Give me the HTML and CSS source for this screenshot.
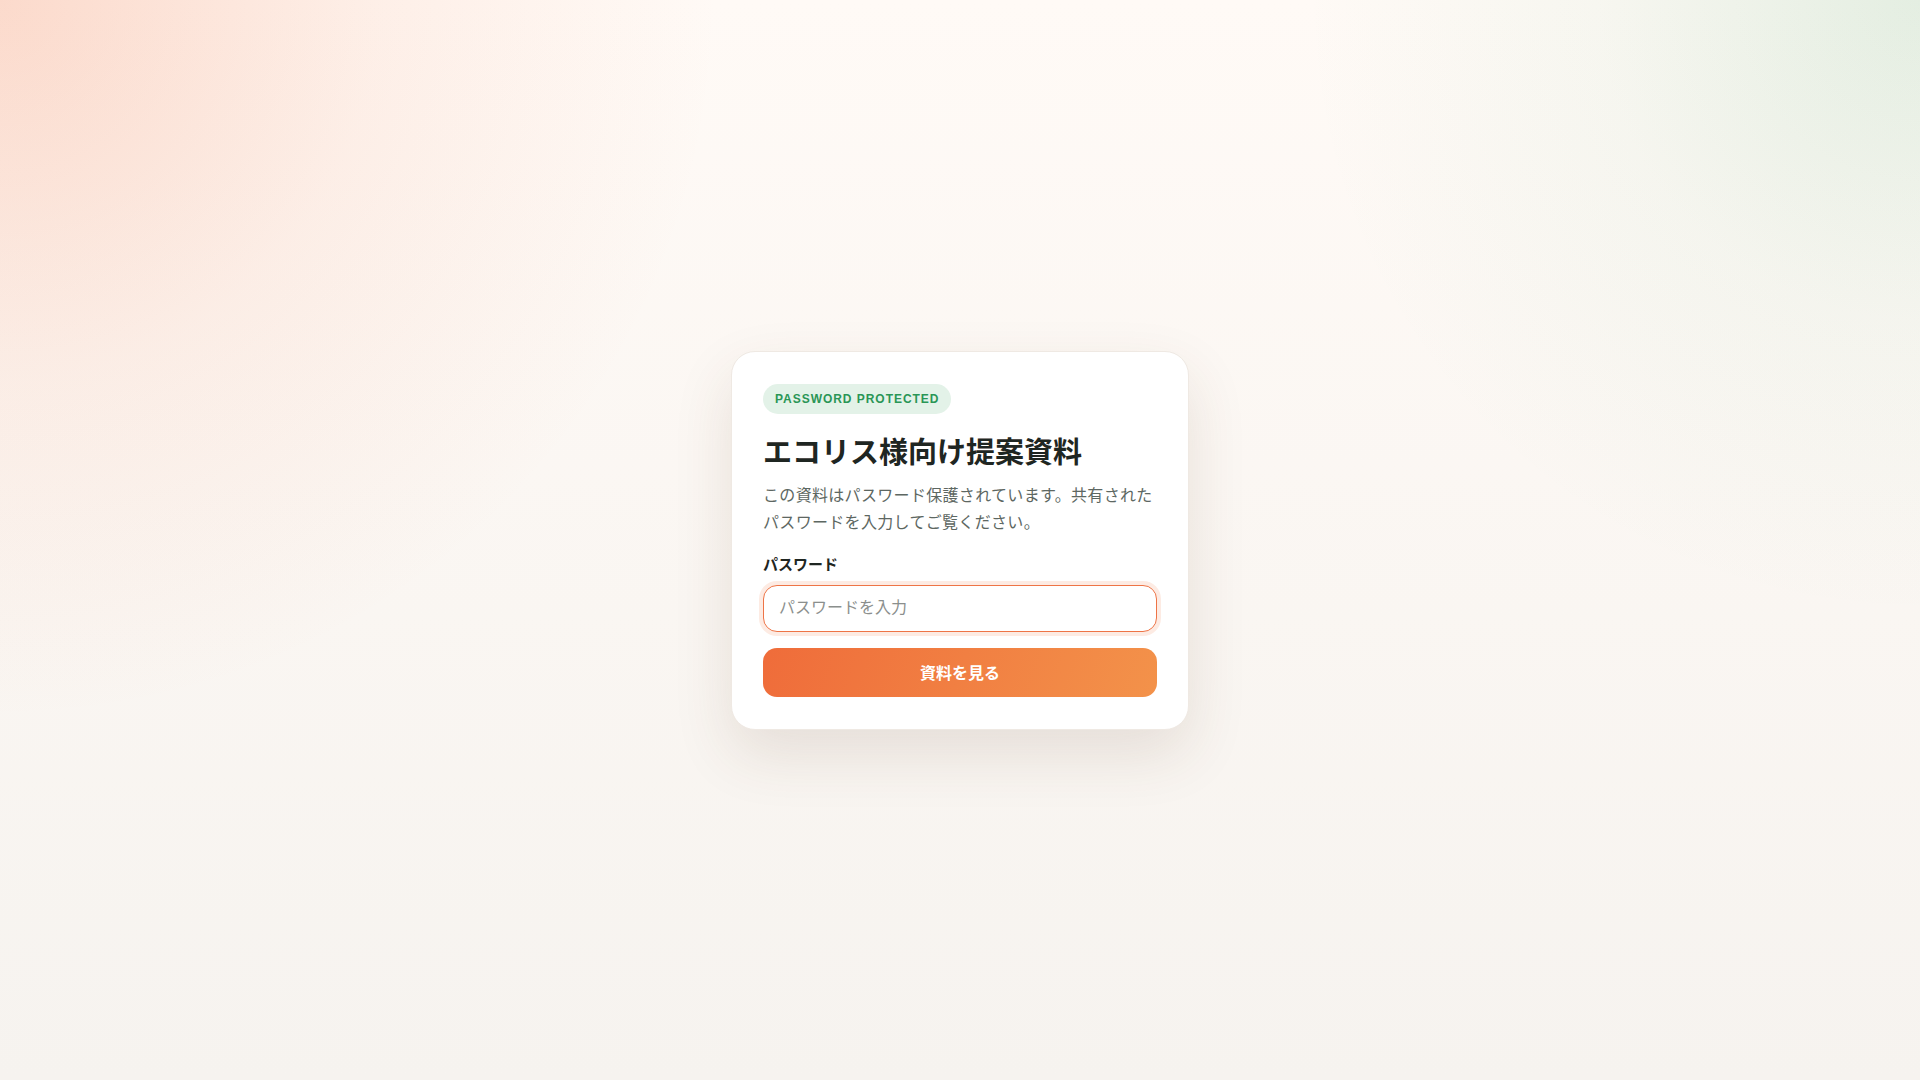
FILE: index.html
```html
<!DOCTYPE html>
<html lang="ja">
<head>
<meta charset="utf-8">
<title>エコリス様向け提案資料</title>
<link rel="stylesheet" href="styles.css">
</head>
<body>
<main class="page">
  <form class="card">
    <span class="badge">PASSWORD PROTECTED</span>
    <h1 class="title">エコリス様向け提案資料</h1>
    <p class="desc">この資料はパスワード保護されています。共有されたパスワードを入力してご覧ください。</p>
    <label class="label" for="pw">パスワード</label>
    <input class="input" id="pw" type="password" placeholder="パスワードを入力">
    <button class="button" type="button">資料を見る</button>
  </form>
</main>
</body>
</html>
```

FILE: styles.css
```css
* { box-sizing: border-box; }
html, body { margin: 0; height: 100%; }
body {
  font-family: "Liberation Sans", "Noto Sans CJK JP", sans-serif;
  color: #1f2622;
  background:
    radial-gradient(circle at 0 0, rgba(240, 112, 64, 0.23) 0, rgba(240, 112, 64, 0.08) 380px, rgba(240, 112, 64, 0) 720px),
    radial-gradient(circle at 100% 0, rgba(47, 158, 90, 0.13) 0, rgba(47, 158, 90, 0.04) 320px, rgba(47, 158, 90, 0) 620px),
    linear-gradient(180deg, #fffaf6 0%, #f6f3ef 100%);
}
.page {
  min-height: 100vh;
  display: flex;
  align-items: center;
  justify-content: center;
}
.card {
  width: 458px;
  padding: 32px 31px 32px;
  background: #ffffff;
  border: 1px solid #efe9e3;
  border-radius: 24px;
  box-shadow: 0 24px 60px rgba(90, 60, 30, 0.12);
  display: flex;
  flex-direction: column;
  align-items: flex-start;
}
.badge {
  display: inline-block;
  height: 30px;
  line-height: 30px;
  padding: 0 12px;
  border-radius: 15px;
  background: #e3f2e8;
  color: #2a9656;
  font-size: 12px;
  font-weight: 700;
  letter-spacing: 0.08em;
}
.title {
  margin: 17px 0 0;
  font-family: "Noto Sans CJK JP", sans-serif;
  font-size: 29px;
  line-height: 38px;
  font-weight: 700;
  color: #1f2622;
}
.desc {
  margin: 13px 0 0;
  font-size: 16px;
  line-height: 27px;
  letter-spacing: 0.02em;
  color: #5d6762;
}
.label {
  margin-top: 19px;
  font-size: 15px;
  line-height: 20px;
  font-weight: 700;
  color: #1f2622;
}
.input {
  margin-top: 10px;
  width: 100%;
  height: 47px;
  padding: 0 15px;
  border: 1px solid #ee7446;
  border-radius: 14px;
  box-shadow: 0 0 0 4px #fdebe3;
  font-family: inherit;
  font-size: 16px;
  color: #1f2622;
  background: #fff;
  outline: none;
}
.input::placeholder { color: #8b8f8d; }
.button {
  margin-top: 16px;
  width: 100%;
  height: 49px;
  border: none;
  border-radius: 14px;
  background: linear-gradient(110deg, #ef6c3a 0%, #f3924a 100%);
  color: #ffffff;
  font-family: inherit;
  font-size: 16px;
  font-weight: 700;
  cursor: pointer;
}
```
